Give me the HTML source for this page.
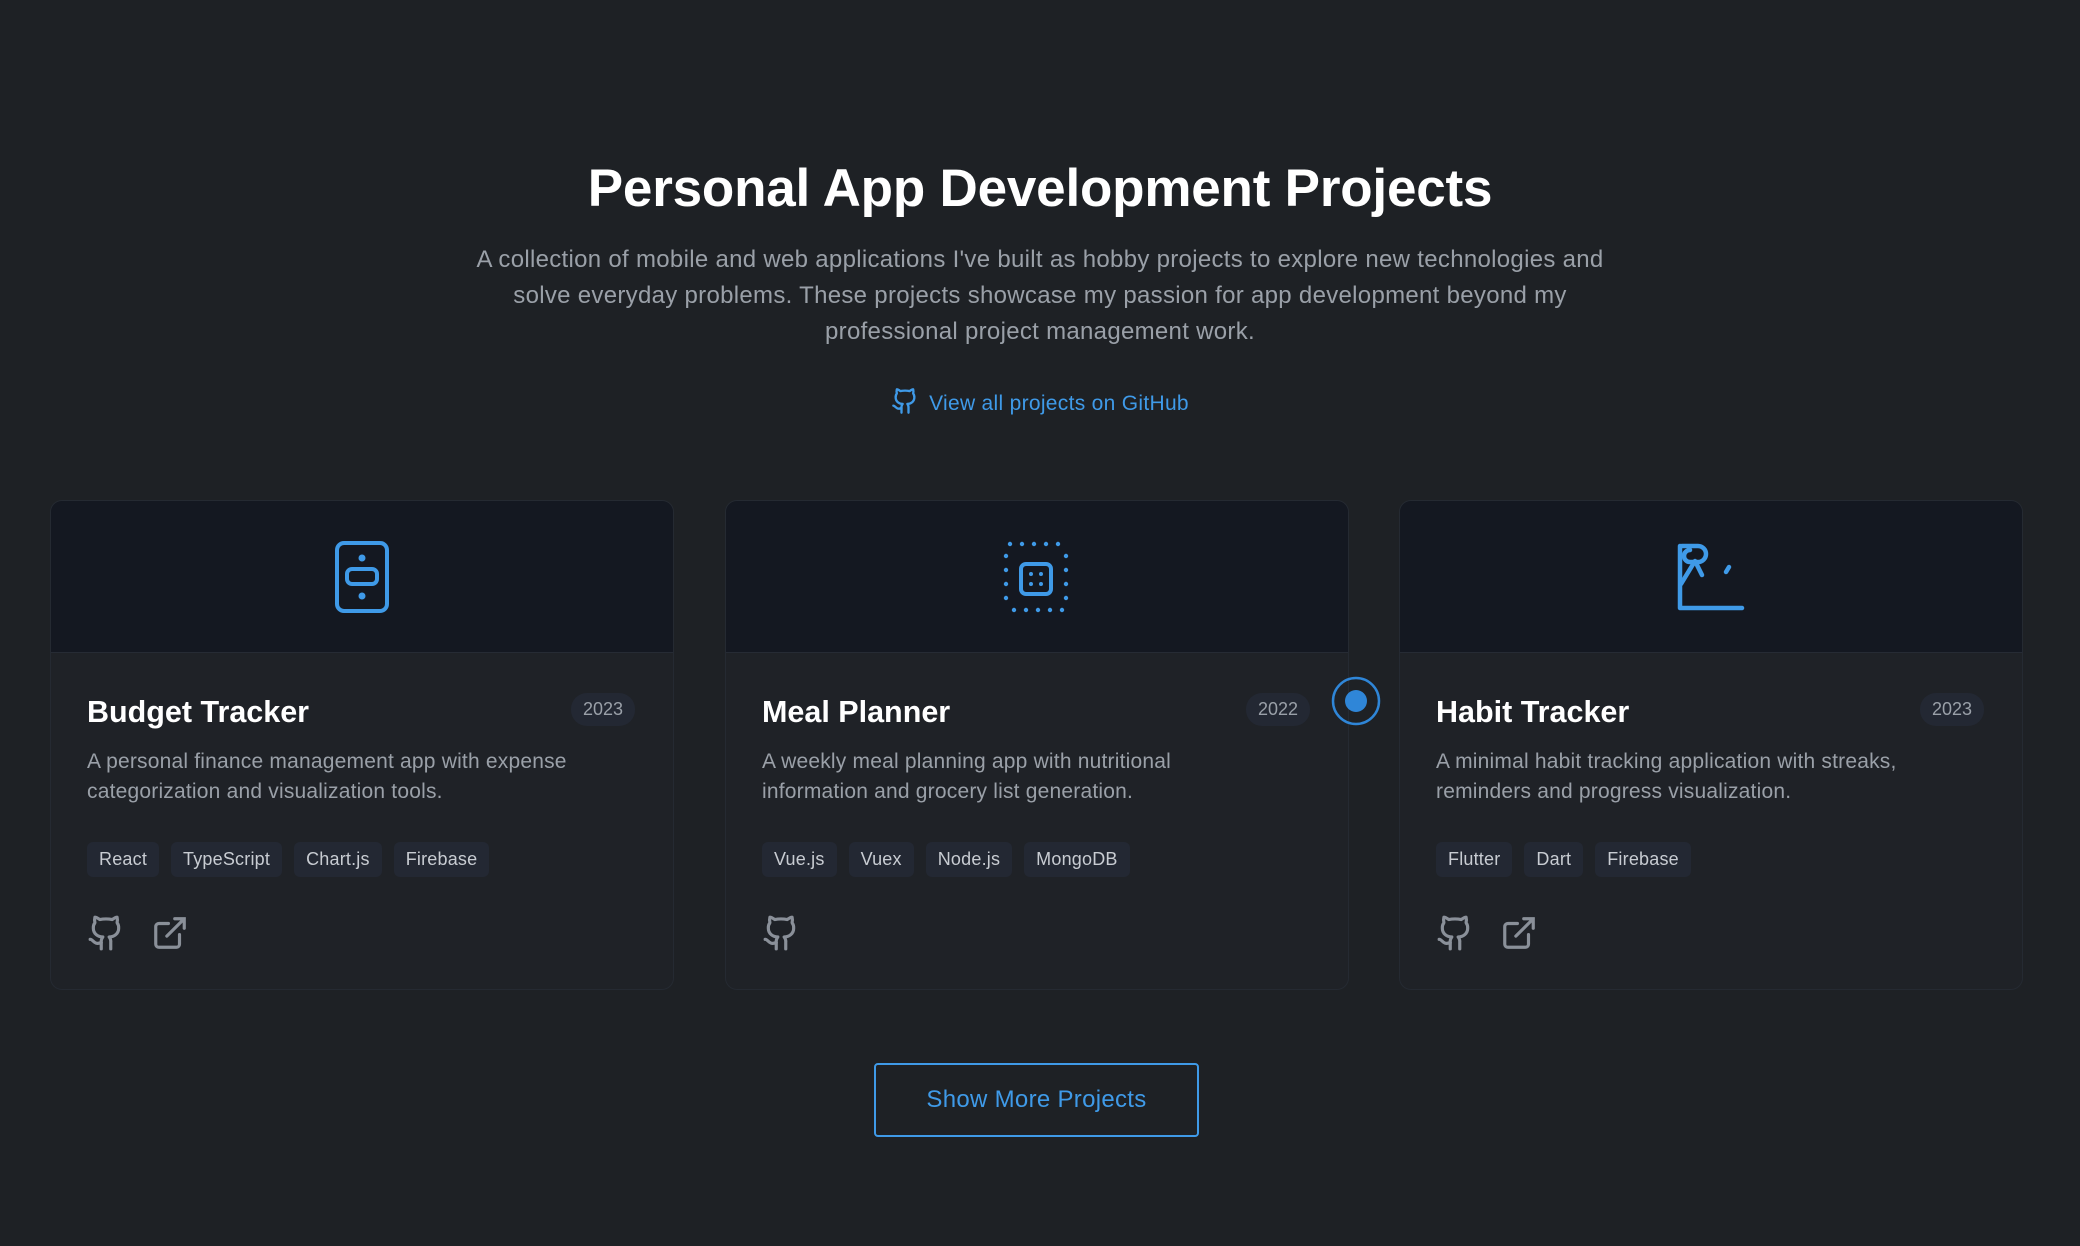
<!DOCTYPE html>
<html><head><meta charset="utf-8"><style>
*{box-sizing:border-box;margin:0;padding:0}
body{width:2080px;height:1246px;background:#1e2125;font-family:"Liberation Sans",sans-serif;position:relative;overflow:hidden}
h1{position:absolute;top:158px;left:0;width:2080px;text-align:center;color:#fff;font-size:53px;font-weight:bold;letter-spacing:-0.2px}
.intro{position:absolute;top:242px;left:475px;width:1130px;text-align:center;color:#9aa0a8;font-size:24px;line-height:36px;letter-spacing:0.3px}
.gh{position:absolute;top:386px;left:0;width:2080px;text-align:center;color:#3f9ae8;font-size:21px;letter-spacing:0.3px}
.gh svg{vertical-align:-6px;margin-right:10px}
.card{position:absolute;top:500px;width:624px;height:490px;background:#1f2227;border:1px solid #252a32;border-radius:12px;overflow:hidden}
.hd{height:152px;background:#141821;border-bottom:1px solid #262b34;display:flex;align-items:center;justify-content:center}
.t{position:absolute;left:36px;top:194px;color:#fff;font-size:30.5px;font-weight:bold}
.yr{position:absolute;right:38px;top:192px;background:#232833;color:#9aa0a8;font-size:18px;padding:6px 12px;border-radius:16px}
.d{position:absolute;left:36px;top:246px;width:510px;color:#9aa0a8;font-size:21px;line-height:30px;letter-spacing:0.2px}
.tags{position:absolute;left:36px;top:341px;display:flex;gap:12px}
.tags span{background:#232833;color:#c8ccd2;font-size:18px;padding:7px 12px;border-radius:6px;letter-spacing:0.2px}
.ic{position:absolute;left:36px;top:412px;display:flex;gap:26px}
.btn{position:absolute;left:874px;top:1063px;width:325px;height:74px;border:2px solid #3f9ae8;border-radius:4px;color:#3f9ae8;font-size:24px;display:flex;align-items:center;justify-content:center;letter-spacing:0.3px}
</style></head><body>
<h1>Personal App Development Projects</h1>
<div class="intro">A collection of mobile and web applications I've built as hobby projects to explore new technologies and solve everyday problems. These projects showcase my passion for app development beyond my professional project management work.</div>
<div class="gh"><svg width="28" height="30" viewBox="0 0 24 24" fill="none" stroke="#3f9ae8" stroke-width="2" stroke-linecap="round" stroke-linejoin="round"><path d="M15 22v-4a4.8 4.8 0 0 0-1-3.5c3 0 6-2 6-5.5.08-1.25-.27-2.48-1-3.5.28-1.15.28-2.35 0-3.5 0 0-1 0-3 1.5-2.64-.5-5.36-.5-8 0C6 2 5 2 5 2c-.3 1.15-.3 2.35 0 3.5A5.4 5.4 0 0 0 4 9c0 3.5 3 5.5 6 5.5-.39.49-.68 1.05-.85 1.65-.17.6-.22 1.23-.15 1.85v4"/><path d="M9 18c-4.51 2-5-2-7-2"/></svg>View all projects on GitHub</div>

<div class="card" style="left:50px">
<div class="hd"><svg width="56" height="74" viewBox="0 0 56 74" fill="none" stroke="#3f9ae8" stroke-width="4"><rect x="3" y="3" width="50" height="68" rx="7"/><rect x="13" y="29" width="30" height="15" rx="5"/><circle cx="28" cy="18" r="1.5" fill="#3f9ae8"/><circle cx="28" cy="56" r="1.5" fill="#3f9ae8"/></svg></div>
<div class="t">Budget Tracker</div><div class="yr">2023</div>
<div class="d">A personal finance management app with expense categorization and visualization tools.</div>
<div class="tags"><span>React</span><span>TypeScript</span><span>Chart.js</span><span>Firebase</span></div>
<div class="ic"><svg width="38" height="40" viewBox="0 0 24 24" fill="none" stroke="#8a9099" stroke-width="2" stroke-linecap="round" stroke-linejoin="round"><path d="M15 22v-4a4.8 4.8 0 0 0-1-3.5c3 0 6-2 6-5.5.08-1.25-.27-2.48-1-3.5.28-1.15.28-2.35 0-3.5 0 0-1 0-3 1.5-2.64-.5-5.36-.5-8 0C6 2 5 2 5 2c-.3 1.15-.3 2.35 0 3.5A5.4 5.4 0 0 0 4 9c0 3.5 3 5.5 6 5.5-.39.49-.68 1.05-.85 1.65-.17.6-.22 1.23-.15 1.85v4"/><path d="M9 18c-4.51 2-5-2-7-2"/></svg><svg width="38" height="40" viewBox="0 0 24 24" fill="none" stroke="#8a9099" stroke-width="2" stroke-linecap="round"><path d="M18 13v6a2 2 0 0 1-2 2H5a2 2 0 0 1-2-2V8a2 2 0 0 1 2-2h6M15 3h6v6M10 14L21 3"/></svg></div>
</div>

<div class="card" style="left:725px">
<div class="hd"><svg width="70" height="74" viewBox="0 0 70 74" fill="#3f9ae8"><circle cx="8" cy="4" r="2.2"/><circle cx="20" cy="4" r="2.2"/><circle cx="32" cy="4" r="2.2"/><circle cx="44" cy="4" r="2.2"/><circle cx="56" cy="4" r="2.2"/><circle cx="12" cy="70" r="2.2"/><circle cx="24" cy="70" r="2.2"/><circle cx="36" cy="70" r="2.2"/><circle cx="48" cy="70" r="2.2"/><circle cx="60" cy="70" r="2.2"/><circle cx="4" cy="16" r="2.2"/><circle cx="4" cy="30" r="2.2"/><circle cx="4" cy="44" r="2.2"/><circle cx="4" cy="58" r="2.2"/><circle cx="64" cy="16" r="2.2"/><circle cx="64" cy="30" r="2.2"/><circle cx="64" cy="44" r="2.2"/><circle cx="64" cy="58" r="2.2"/><rect x="19" y="24" width="30" height="30" rx="5" fill="none" stroke="#3f9ae8" stroke-width="4"/><circle cx="29" cy="34" r="2"/><circle cx="39" cy="34" r="2"/><circle cx="29" cy="44" r="2"/><circle cx="39" cy="44" r="2"/></svg></div>
<div class="t">Meal Planner</div><div class="yr">2022</div>
<div class="d">A weekly meal planning app with nutritional information and grocery list generation.</div>
<div class="tags"><span>Vue.js</span><span>Vuex</span><span>Node.js</span><span>MongoDB</span></div>
<div class="ic"><svg width="38" height="40" viewBox="0 0 24 24" fill="none" stroke="#8a9099" stroke-width="2" stroke-linecap="round" stroke-linejoin="round"><path d="M15 22v-4a4.8 4.8 0 0 0-1-3.5c3 0 6-2 6-5.5.08-1.25-.27-2.48-1-3.5.28-1.15.28-2.35 0-3.5 0 0-1 0-3 1.5-2.64-.5-5.36-.5-8 0C6 2 5 2 5 2c-.3 1.15-.3 2.35 0 3.5A5.4 5.4 0 0 0 4 9c0 3.5 3 5.5 6 5.5-.39.49-.68 1.05-.85 1.65-.17.6-.22 1.23-.15 1.85v4"/><path d="M9 18c-4.51 2-5-2-7-2"/></svg></div>
</div>

<div class="card" style="left:1399px">
<div class="hd"><svg width="70" height="70" viewBox="0 0 70 70" fill="none" stroke="#3f9ae8" stroke-width="4.5" stroke-linecap="round" stroke-linejoin="round"><path d="M4 4v62h62"/><path d="M6 4h16a8 8 0 0 1 0 16h-8a6 6 0 0 1 0-12"/><path d="M5 42L19 19l7 14"/><path d="M50 30l3-5"/></svg></div>
<div class="t">Habit Tracker</div><div class="yr">2023</div>
<div class="d">A minimal habit tracking application with streaks, reminders and progress visualization.</div>
<div class="tags"><span>Flutter</span><span>Dart</span><span>Firebase</span></div>
<div class="ic"><svg width="38" height="40" viewBox="0 0 24 24" fill="none" stroke="#8a9099" stroke-width="2" stroke-linecap="round" stroke-linejoin="round"><path d="M15 22v-4a4.8 4.8 0 0 0-1-3.5c3 0 6-2 6-5.5.08-1.25-.27-2.48-1-3.5.28-1.15.28-2.35 0-3.5 0 0-1 0-3 1.5-2.64-.5-5.36-.5-8 0C6 2 5 2 5 2c-.3 1.15-.3 2.35 0 3.5A5.4 5.4 0 0 0 4 9c0 3.5 3 5.5 6 5.5-.39.49-.68 1.05-.85 1.65-.17.6-.22 1.23-.15 1.85v4"/><path d="M9 18c-4.51 2-5-2-7-2"/></svg><svg width="38" height="40" viewBox="0 0 24 24" fill="none" stroke="#8a9099" stroke-width="2" stroke-linecap="round"><path d="M18 13v6a2 2 0 0 1-2 2H5a2 2 0 0 1-2-2V8a2 2 0 0 1 2-2h6M15 3h6v6M10 14L21 3"/></svg></div>
</div>

<svg style="position:absolute;left:1331px;top:676px" width="50" height="50" viewBox="0 0 50 50"><circle cx="25" cy="25" r="23" fill="none" stroke="#2f86d8" stroke-width="2.5"/><circle cx="25" cy="25" r="11" fill="#2f86d8"/></svg>

<div class="btn">Show More Projects</div>
</body></html>
